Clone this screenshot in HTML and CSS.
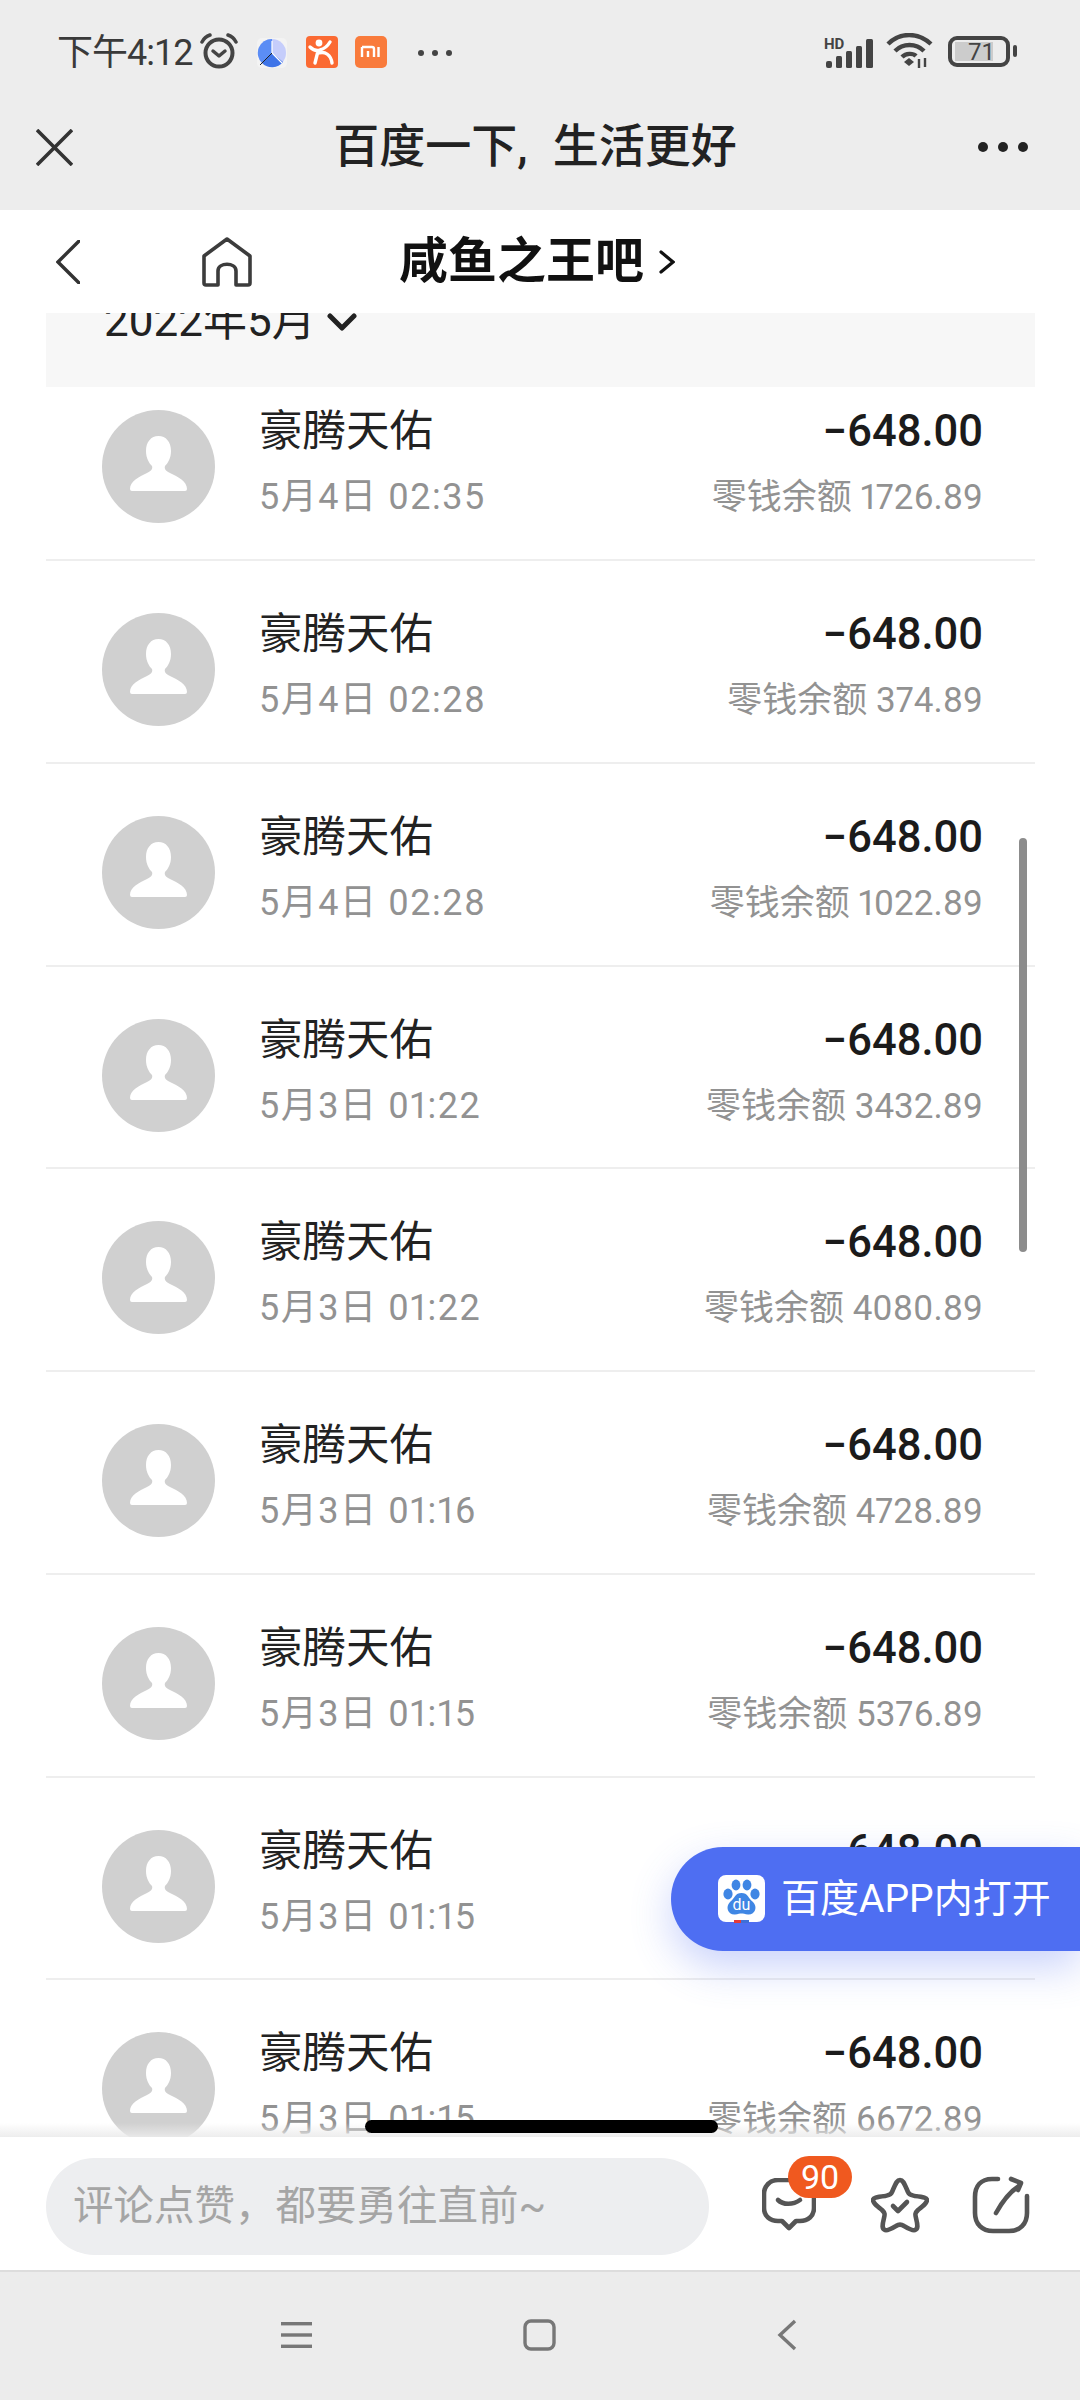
FILE: index.html
```html
<!DOCTYPE html>
<html lang="zh-CN">
<head>
    <meta charset="UTF-8">
    <meta name="viewport" content="width=device-width, initial-scale=1.0">
    <title>咸鱼之王吧</title>
    <link rel="stylesheet" href="styles.css">
</head>
<body>
    <svg class="defs" width="0" height="0">
        <symbol id="avatar" viewBox="0 0 113 113">
            <circle cx="56.5" cy="56.5" r="56.5" fill="#d0d0d0"/>
            <path fill="#fff" d="M56.5 26C64 26 69 32 69 41C69 48 66 53 63 56C62 59 64 61 68 63C76 67 85 71 85 79Q85 81 83 81H30Q28 81 28 79C28 71 37 67 45 63C49 61 51 59 50 56C47 53 44 48 44 41C44 32 49 26 56.5 26Z"/>
        </symbol>
    </svg>

    <div id="page">
        <div class="top-gray">
            <div class="status">
                <span class="time">下午4:12</span>
                <svg class="ic-alarm" width="40" height="36" viewBox="0 0 40 36" fill="none" stroke="#444" stroke-linecap="round">
                    <circle cx="20" cy="20" r="13.5" stroke-width="4"/>
                    <path d="M14 18l6 5 6-5" stroke-width="3.5" stroke-linejoin="round"/>
                    <path d="M3 9C5 5 8 3 11 2M37 9C35 5 32 3 29 2" stroke-width="3.5"/>
                </svg>
                <svg class="ic-clock" width="30" height="30" viewBox="0 0 30 30">
                    <rect width="30" height="30" rx="5" fill="#f3f3f3"/>
                    <circle cx="15" cy="15" r="14" fill="#c5cdfb"/>
                    <path d="M15 15L15 1A14 14 0 0 0 5 25Z" fill="#5b8df5"/>
                    <path d="M15 15L5 25A14 14 0 0 0 26 24Z" fill="#3e74e8"/>
                    <path d="M15 3V15L25 25" stroke="#fff" stroke-width="1.2" fill="none"/>
                    <path d="M15 15L3 27" stroke="#222" stroke-width="1"/>
                </svg>
                <svg class="ic-app" width="32" height="32" viewBox="0 0 32 32">
                    <rect width="32" height="32" rx="4" fill="#fb6a33"/>
                    <circle cx="13" cy="7" r="3.4" fill="#fff"/>
                    <path d="M4 11C8 15 11 15 14 14C18 13 21 11 24 6M12 15L9 27M13 17C19 15 25 19 26 27" fill="none" stroke="#fff" stroke-width="3.4" stroke-linecap="round"/>
                </svg>
                <svg class="ic-mi" width="32" height="32" viewBox="0 0 32 32">
                    <rect width="32" height="32" rx="5" fill="#f97b3c"/>
                    <path d="M7 11H17Q19 11 19 13V21M7 11V21M13 15V21M23.5 11V21" fill="none" stroke="#fff" stroke-width="2.4"/>
                </svg>
                <span class="status-dots"><i></i><i></i><i></i></span>
                <span class="status-right">
                    <svg class="ic-signal" width="52" height="32" viewBox="0 0 52 32">
                        <text x="0" y="12" class="hd-text">HD</text>
                        <rect x="2" y="24" width="6" height="7" rx="2" fill="#444"/>
                        <rect x="12" y="19" width="6" height="12" rx="1.5" fill="#444"/>
                        <rect x="22" y="14" width="6" height="17" rx="1.5" fill="#444"/>
                        <rect x="32" y="9" width="6" height="22" rx="1.5" fill="#444"/>
                        <rect x="42" y="2" width="7" height="29" rx="1.5" fill="#444"/>
                    </svg>
                    <svg class="ic-wifi" width="47" height="36" viewBox="0 0 47 36" fill="none" stroke="#444" stroke-width="4.4">
                        <path d="M2 11C14 -1 32 -1 45 11"/>
                        <path d="M9 18C17 10 30 10 38 18"/>
                        <path d="M16 24C20 20 27 20 30 23"/>
                        <path d="M18 29L23 25L28 29L23 33Z" fill="#444" stroke="none"/>
                        <path d="M33 26V35M39 25V34" stroke-width="2.4"/>
                    </svg>
                    <span class="battery"><span class="battery-fill"></span><span class="battery-num">71</span></span>
                    <span class="battery-nub"></span>
                </span>
            </div>
            <div class="title-bar">
                <svg class="ic-close" width="37" height="37" viewBox="0 0 37 37" fill="none" stroke="#333" stroke-width="3.6">
                    <path d="M1 1L36 36M36 1L1 36"/>
                </svg>
                <span class="page-title">百度一下, 生活更好</span>
                <span class="more-dots"><i></i><i></i><i></i></span>
            </div>
        </div>

        <div class="nav">
            <svg class="ic-back" width="24" height="44" viewBox="0 0 24 44" fill="none" stroke="#333" stroke-width="3.4" stroke-linecap="round">
                <path d="M23 1L2 22L23 43"/>
            </svg>
            <svg class="ic-home" width="50" height="50" viewBox="0 0 50 50" fill="none" stroke="#3c3c3c" stroke-width="3.6" stroke-linejoin="round">
                <path d="M25 2L48 19V46Q48 48 46 48H34V34C34 25 16 25 16 34V48H4Q2 48 2 46V19Z"/>
            </svg>
            <span class="forum">咸鱼之王吧</span>
            <svg class="ic-forum-arrow" width="16" height="24" viewBox="0 0 16 24" fill="none" stroke="#111" stroke-width="3.2" stroke-linecap="round">
                <path d="M2 2L14 12L2 22"/>
            </svg>
        </div>

        <div class="list">
            <div class="month">
                <span class="month-text">2022年5月</span>
                <svg width="30" height="18" viewBox="0 0 30 18" fill="none" stroke="#222" stroke-width="5" stroke-linecap="round" stroke-linejoin="round">
                    <path d="M3 3L15 15L27 3"/>
                </svg>
            </div>

            <div class="row row-first">
                <svg class="avatar"><use href="#avatar"/></svg>
                <div class="info"><span class="name">豪腾天佑</span><span class="date">5月4日 02:35</span></div>
                <div class="money"><span class="amount">−648.00</span><span class="balance">零钱余额 1726.89</span></div>
            </div>
            <div class="row">
                <svg class="avatar"><use href="#avatar"/></svg>
                <div class="info"><span class="name">豪腾天佑</span><span class="date">5月4日 02:28</span></div>
                <div class="money"><span class="amount">−648.00</span><span class="balance">零钱余额 374.89</span></div>
            </div>
            <div class="row">
                <svg class="avatar"><use href="#avatar"/></svg>
                <div class="info"><span class="name">豪腾天佑</span><span class="date">5月4日 02:28</span></div>
                <div class="money"><span class="amount">−648.00</span><span class="balance">零钱余额 1022.89</span></div>
            </div>
            <div class="row">
                <svg class="avatar"><use href="#avatar"/></svg>
                <div class="info"><span class="name">豪腾天佑</span><span class="date">5月3日 01:22</span></div>
                <div class="money"><span class="amount">−648.00</span><span class="balance">零钱余额 3432.89</span></div>
            </div>
            <div class="row">
                <svg class="avatar"><use href="#avatar"/></svg>
                <div class="info"><span class="name">豪腾天佑</span><span class="date">5月3日 01:22</span></div>
                <div class="money"><span class="amount">−648.00</span><span class="balance">零钱余额 4080.89</span></div>
            </div>
            <div class="row">
                <svg class="avatar"><use href="#avatar"/></svg>
                <div class="info"><span class="name">豪腾天佑</span><span class="date">5月3日 01:16</span></div>
                <div class="money"><span class="amount">−648.00</span><span class="balance">零钱余额 4728.89</span></div>
            </div>
            <div class="row">
                <svg class="avatar"><use href="#avatar"/></svg>
                <div class="info"><span class="name">豪腾天佑</span><span class="date">5月3日 01:15</span></div>
                <div class="money"><span class="amount">−648.00</span><span class="balance">零钱余额 5376.89</span></div>
            </div>
            <div class="row">
                <svg class="avatar"><use href="#avatar"/></svg>
                <div class="info"><span class="name">豪腾天佑</span><span class="date">5月3日 01:15</span></div>
                <div class="money"><span class="amount">−648.00</span><span class="balance">零钱余额 6024.89</span></div>
            </div>
            <div class="row">
                <svg class="avatar"><use href="#avatar"/></svg>
                <div class="info"><span class="name">豪腾天佑</span><span class="date">5月3日 01:15</span></div>
                <div class="money"><span class="amount">−648.00</span><span class="balance">零钱余额 6672.89</span></div>
            </div>
        </div>

        <div class="comment-bar">
            <div class="comment-input">评论点赞，都要勇往直前~</div>
            <span class="tool tool-comment">
                <svg width="54" height="54" viewBox="0 0 54 54" fill="none" stroke="#555" stroke-width="4.6" stroke-linecap="round" stroke-linejoin="round">
                    <path d="M16 2H38C47 2 52 8 52 16V30C52 38 46 43 38 43H34L27 50L20 43H16C8 43 2 38 2 30V16C2 8 8 2 16 2Z"/>
                    <path d="M16 22C21 27 31 27 38 22"/>
                </svg>
                <span class="badge">90</span>
            </span>
            <svg class="tool tool-star" width="58" height="56" viewBox="0 0 58 56" fill="none" stroke="#555" stroke-width="4.6" stroke-linecap="round" stroke-linejoin="round">
                <path d="M29 3C32 3 33 6 37 15C38 18 40 18 44 19C53 20 56 21 56 23C56 26 52 29 47 33C44 36 44 37 45 41C47 49 47 52 44 53C42 54 38 52 33 49C30 47 28 47 25 49C20 52 16 54 14 53C11 52 11 49 13 41C14 37 14 36 11 33C6 29 2 26 2 23C2 21 5 20 14 19C18 18 20 18 21 15C25 6 26 3 29 3Z"/>
                <path d="M22 29L27 34L36 25"/>
            </svg>
            <svg class="tool tool-share" width="58" height="58" viewBox="0 0 58 58" fill="none" stroke="#555" stroke-width="4.6" stroke-linecap="round" stroke-linejoin="round">
                <path d="M26 3H20C9 3 3 10 3 21V37C3 48 10 55 21 55H37C48 55 55 48 55 37V20"/>
                <path d="M24 37C29 28 36 17 47 10"/>
                <path d="M39 3L49 7L46 14"/>
            </svg>
        </div>

        <div class="sys-nav">
            <svg width="31" height="26" viewBox="0 0 31 26" fill="#777">
                <rect width="31" height="3.4"/>
                <rect y="11.3" width="31" height="3.4"/>
                <rect y="22.6" width="31" height="3.4"/>
            </svg>
            <svg width="33" height="32" viewBox="0 0 33 32" fill="none" stroke="#777" stroke-width="3.4">
                <rect x="2" y="2" width="29" height="28" rx="6"/>
            </svg>
            <svg class="sys-back" width="20" height="32" viewBox="0 0 20 32" fill="none" stroke="#777" stroke-width="3.4">
                <path d="M18 2L3 16L18 30"/>
            </svg>
        </div>

        <div class="scrollbar"></div>
        <div class="home-bar"></div>

        <div class="open-app">
            <svg class="du-logo" width="47" height="48" viewBox="0 0 47 48">
                <rect width="47" height="47" rx="8" fill="#fff"/>
                <g fill="#3f86e4">
                    <ellipse cx="10" cy="19" rx="4.6" ry="5.4"/>
                    <ellipse cx="18" cy="10" rx="4.4" ry="5.4"/>
                    <ellipse cx="29" cy="10" rx="4.4" ry="5.4"/>
                    <ellipse cx="37" cy="19" rx="4.6" ry="5.4"/>
                    <path d="M23.5 18C30 18 30 23 35 27C40 32 37 40 30 39.5C27 39 25 38.5 23.5 38.5C22 38.5 20 39 17 39.5C10 40 7 32 12 27C17 23 17 18 23.5 18Z"/>
                </g>
                <text x="23.5" y="35" class="du-text">du</text>
                <rect x="16" y="45" width="7" height="3" fill="#e33b3b"/>
                <rect x="23" y="45" width="8" height="3" fill="#3f6fd8"/>
            </svg>
            <span class="open-text">百度APP内打开</span>
        </div>
    </div>
</body>
</html>
```

FILE: styles.css
```css
* {
    box-sizing: border-box;
}

body {
    margin: 0;
    font-family: Roboto, "Noto Sans CJK SC", sans-serif;
    background-color: #fff;
    color: #1b1b1b;
}

.defs {
    position: absolute;
}

#page {
    position: relative;
    width: 1080px;
    height: 2400px;
    overflow: hidden;
    display: flex;
    flex-direction: column;
}

/* top gray part */
.top-gray {
    height: 210px;
    background-color: #ededed;
}

.status {
    height: 106px;
    padding: 33px 0 0 57px;
    display: flex;
    align-items: flex-start;
}

.time {
    font-size: 36px;
    letter-spacing: -1px;
    line-height: 40px;
    color: #3a3a3a;
    width: 143px;
    white-space: nowrap;
}

.ic-alarm {
    margin-left: -1px;
    margin-right: 18px;
}

.ic-clock {
    margin-top: 5px;
    margin-right: 19px;
}

.ic-app {
    margin-top: 3px;
    margin-right: 17px;
}

.ic-mi {
    margin-top: 3px;
    margin-right: 31px;
}

.status-dots {
    display: flex;
    gap: 8px;
    margin-top: 17px;
}

.status-dots i {
    width: 6px;
    height: 6px;
    border-radius: 50%;
    background-color: #444;
}

.status-right {
    margin-left: 372px;
    display: flex;
    align-items: flex-start;
}

.ic-signal {
    margin-top: 4px;
}

.hd-text {
    font-family: Roboto, sans-serif;
    font-size: 15px;
    font-weight: 700;
    fill: #444;
}

.ic-wifi {
    margin-left: 10px;
}

.battery {
    position: relative;
    width: 62px;
    height: 31px;
    margin-left: 15px;
    margin-top: 3px;
    border: 4px solid #444;
    border-radius: 9px;
}

.battery-fill {
    display: block;
    width: 38px;
    height: 19px;
    margin: 2px 0 0 3px;
    background-color: #ccc;
}

.battery-num {
    position: absolute;
    top: -3px;
    left: 16px;
    font-size: 24px;
    line-height: 30px;
    color: #444;
}

.battery-nub {
    width: 4px;
    height: 12px;
    margin: 12px 0 0 3px;
    border-radius: 2px;
    background-color: #444;
}

.title-bar {
    height: 104px;
    position: relative;
    display: flex;
    align-items: center;
    padding: 0 52px 22px 36px;
    justify-content: space-between;
}

.page-title {
    position: absolute;
    left: 0;
    right: 10px;
    top: 10px;
    text-align: center;
    font-size: 46px;
    font-weight: 500;
    word-spacing: 14px;
    line-height: 60px;
    color: #222;
    white-space: nowrap;
}

.more-dots {
    display: flex;
    gap: 10px;
}

.more-dots i {
    width: 10px;
    height: 10px;
    border-radius: 50%;
    background-color: #222;
}

/* white nav under it */
.nav {
    height: 103px;
    background-color: #fff;
    display: flex;
    align-items: center;
    padding-left: 56px;
    flex-shrink: 0;
    position: relative;
    z-index: 1;
}

.ic-back {
    margin-right: 122px;
}

.ic-home {
    margin-right: 147px;
}

.forum {
    font-size: 49px;
    font-weight: 700;
    color: #111;
    line-height: 60px;
}

.ic-forum-arrow {
    margin-left: 15px;
}

/* list */
.list {
    height: 1824px;
    overflow: hidden;
    position: relative;
    padding: 0 45px 0 46px;
}

.list::after {
    content: "";
    position: absolute;
    left: 0;
    right: 0;
    bottom: 0;
    height: 14px;
    background: linear-gradient(rgba(235, 235, 235, 0), rgba(235, 235, 235, 0.9));
}

.month {
    height: 74px;
    background-color: #f7f7f7;
    padding-left: 58px;
    display: flex;
    gap: 11px;
    overflow: hidden;
}

.month-text {
    font-size: 44px;
    line-height: 50px;
    margin-top: -17px;
    color: #222;
}

.row {
    height: 202.75px;
    display: flex;
    padding: 53px 52px 0 56px;
    border-bottom: 2px solid #eee;
}

.row-first {
    height: 174px;
    padding-top: 24px;
}

.avatar {
    width: 113px;
    height: 113px;
    margin-top: -1px;
    flex-shrink: 0;
}

.info {
    margin-left: 44px;
    display: flex;
    flex-direction: column;
}

.name {
    font-size: 43.5px;
    line-height: 42px;
    color: #222;
}

.date {
    font-size: 36px;
    line-height: 46px;
    margin-top: 21px;
    color: #929292;
    font-feature-settings: "pnum";
    letter-spacing: 1.5px;
    white-space: nowrap;
}

.money {
    margin-left: auto;
    display: flex;
    flex-direction: column;
    align-items: flex-end;
}

.amount {
    font-size: 43.5px;
    line-height: 42px;
    font-weight: 500;
    color: #1b1b1b;
}

.balance {
    font-size: 35px;
    line-height: 46px;
    margin-top: 22px;
    color: #929292;
    font-feature-settings: "pnum";
    white-space: nowrap;
}

/* bottom */
.comment-bar {
    height: 133px;
    background-color: #fff;
    display: flex;
    align-items: center;
    padding-left: 46px;
    flex-shrink: 0;
    position: relative;
}

.comment-input {
    width: 663px;
    height: 97px;
    margin-top: 5px;
    border-radius: 49px;
    background-color: #edeef0;
    color: #a5a5a5;
    font-size: 40.5px;
    line-height: 97px;
    padding-left: 27px;
}

.tool {
    flex-shrink: 0;
}

.tool-comment {
    position: relative;
    margin-left: 53px;
    margin-top: 3px;
    height: 54px;
    margin-right: 55px;
}

.badge {
    position: absolute;
    left: 26px;
    top: -22px;
    width: 64px;
    height: 42px;
    border-radius: 21px;
    background-color: #f0591f;
    color: #fff;
    font-size: 34px;
    line-height: 42px;
    text-align: center;
}

.tool-star {
    margin-right: 43px;
    margin-top: 3px;
}

.tool-share {
    margin-top: 3px;
}

.sys-nav {
    flex: 1;
    background-color: #ececec;
    border-top: 2px solid #ddd;
    display: flex;
    align-items: center;
    padding: 0 0 2px 281px;
    gap: 211px;
}

.sys-back {
    margin-left: 10px;
}

.scrollbar {
    position: absolute;
    left: 1019px;
    top: 838px;
    width: 8px;
    height: 414px;
    border-radius: 4px;
    background-color: #8c8c8c;
}

.home-bar {
    position: absolute;
    left: 365px;
    top: 2120px;
    width: 353px;
    height: 13px;
    border-radius: 7px;
    background-color: #000;
}

.open-app {
    position: absolute;
    left: 671px;
    top: 1847px;
    width: 409px;
    height: 104px;
    border-radius: 52px 0 0 52px;
    background-color: #4e6ef2;
    box-shadow: 0 16px 40px rgba(78, 110, 242, 0.3);
    display: flex;
    align-items: center;
    padding-left: 47px;
}

.du-logo {
    flex-shrink: 0;
}

.du-text {
    font-family: Roboto, sans-serif;
    font-size: 16px;
    fill: #fff;
    text-anchor: middle;
}

.open-text {
    margin-left: 16px;
    margin-top: -9px;
    font-size: 39px;
    color: #fff;
    white-space: nowrap;
}
```
